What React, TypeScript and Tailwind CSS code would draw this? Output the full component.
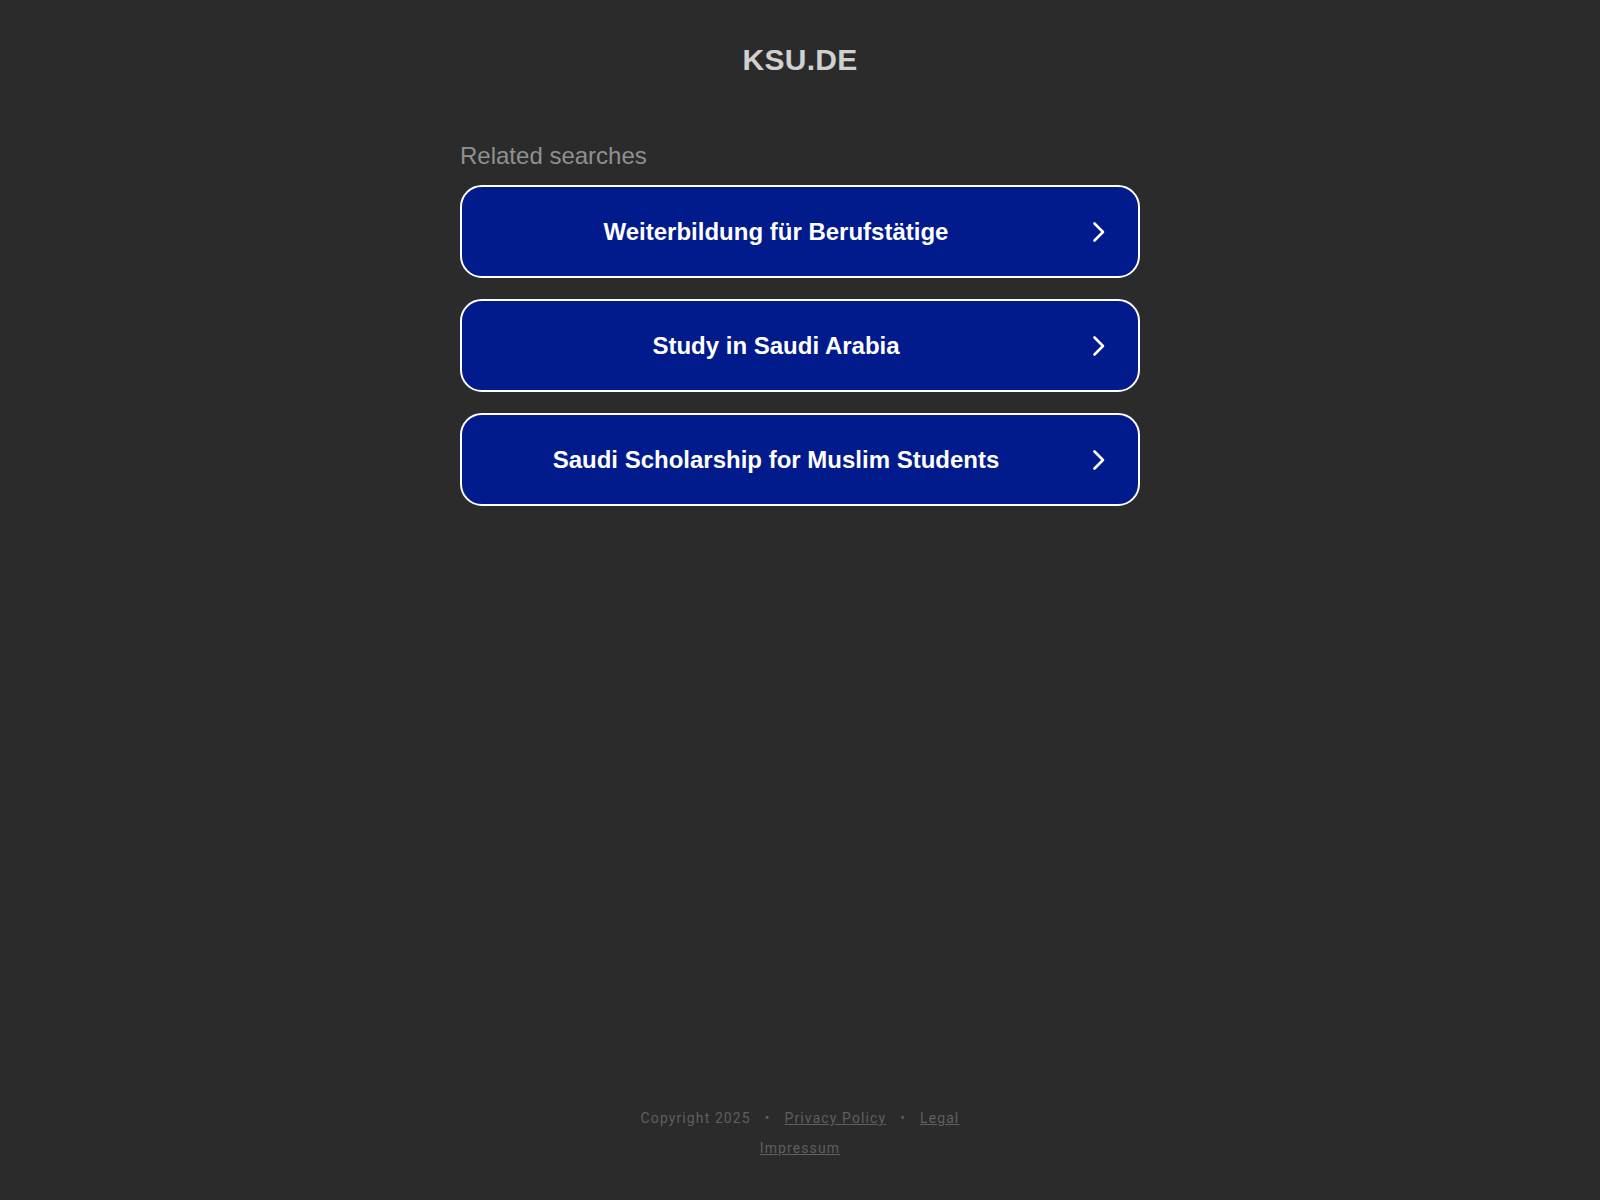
import React from 'react';

const searches = [
  'Weiterbildung für Berufstätige',
  'Study in Saudi Arabia',
  'Saudi Scholarship for Muslim Students',
];

const Chevron: React.FC = () => (
  <svg width="14" height="22" viewBox="0 0 14 22" fill="none" className="shrink-0">
    <path d="M2.5 2.5 L11 11 L2.5 19.5" stroke="white" strokeWidth="2.6" strokeLinecap="round" strokeLinejoin="round" />
  </svg>
);

const App: React.FC = () => {
  return (
    <div className="min-h-[1200px] bg-[#2b2b2b] flex flex-col items-center" style={{ fontFamily: 'Arial, "Liberation Sans", sans-serif' }}>
      <h1 className="mt-[40px] text-[30px] leading-[40px] font-bold text-[#d0d0d0] tracking-[0.3px]">KSU.DE</h1>

      <div className="w-[680px] mt-[62px]">
        <div className="text-[24px] leading-[28px] text-[#909090]">Related searches</div>
        <div className="mt-[15px] flex flex-col gap-[21px]">
          {searches.map((s) => (
            <a
              key={s}
              href="#"
              className="h-[93px] flex items-center bg-[#011a8c] border-2 border-white rounded-[22px] pl-[40px] pr-[32px]"
            >
              <span className="flex-1 text-center text-[24px] font-bold text-white pr-[42px]">{s}</span>
              <Chevron />
            </a>
          ))}
        </div>
      </div>

      <div className="flex-1" />

      <footer className="pb-[42px] flex flex-col items-center text-[14px] tracking-[1.1px] text-[#5f5f5f]" style={{ fontFamily: 'Roboto, Arial, sans-serif' }}>
        <div className="flex items-center leading-[20px]">
          <span>Copyright 2025</span>
          <span className="mx-[14px]">•</span>
          <a href="#" className="underline">Privacy Policy</a>
          <span className="mx-[14px]">•</span>
          <a href="#" className="underline">Legal</a>
        </div>
        <a href="#" className="underline mt-[10px] leading-[20px]">Impressum</a>
      </footer>
    </div>
  );
};

export default App;
